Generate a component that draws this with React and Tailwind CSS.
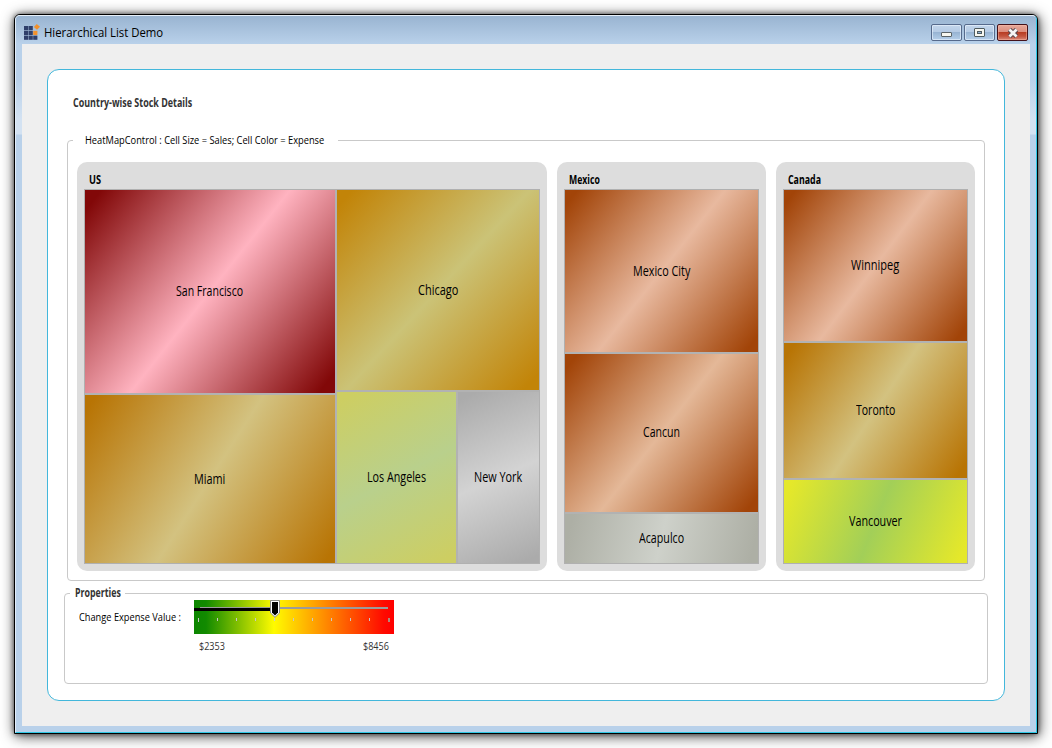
import { useLayoutEffect, useRef } from "react";

// Text squeezed horizontally to a given width, like a narrow UI face.
function Label({ text, w, className = "" }) {
  const inner = useRef(null);
  useLayoutEffect(() => {
    const el = inner.current;
    el.style.transform = `scaleX(${w / el.offsetWidth})`;
  }, [w]);
  return (
    <span className={`flex shrink-0 ${className}`} style={{ width: w }}>
      <span ref={inner} className="inline-block origin-left whitespace-nowrap">
        {text}
      </span>
    </span>
  );
}

function Cell({ name, w, className }) {
  return (
    <div className={`flex items-center justify-center pr-px text-[14px] leading-[18px] ${className}`}>
      <Label text={name} w={w} />
    </div>
  );
}

function Country({ name, w, className, children }) {
  return (
    <section className={`flex h-[409px] flex-col rounded-[10px] bg-[#dddddd] px-[7px] pb-[7px] ${className}`}>
      <h2 className="flex h-[27px] shrink-0 items-center pl-[5px] pt-[9px] text-[11.5px] leading-[16px] font-bold">
        <Label text={name} w={w} />
      </h2>
      <div className="flex min-h-0 flex-1 gap-[2px] border border-[#b0b0b0] bg-[#b2b2b2]">{children}</div>
    </section>
  );
}

function TitleButton({ close = false, children }) {
  return (
    <button
      className={`flex h-[17px] w-[31px] items-center justify-center rounded-[2px] border ${
        close
          ? "border-[#43111a] bg-[linear-gradient(180deg,#e6a99c_0%,#dc8c7c_48%,#b83d24_50%,#c4553f_75%,#d8897a_100%)] shadow-[inset_0_0_0_1px_rgba(255,190,170,0.45)]"
          : "border-[#566a8c] bg-[linear-gradient(180deg,#c3d6ec_0%,#b4cae4_48%,#98b4d3_50%,#b5cfea_100%)] shadow-[inset_0_0_0_1px_rgba(235,245,255,0.6)]"
      }`}
    >
      {children}
    </button>
  );
}

function AppIcon() {
  return (
    <svg width="16" height="16" viewBox="0 0 16 16" className="-mt-px shrink-0">
      <g fill="#2f3f6b">
        <rect x="0" y="2" width="4.2" height="4.2" />
        <rect x="4.6" y="2" width="4.2" height="4.2" />
        <rect x="0" y="6.8" width="4.2" height="4.2" />
        <rect x="4.6" y="6.8" width="4.2" height="4.2" />
        <rect x="0" y="11.6" width="4.2" height="4.2" />
        <rect x="4.6" y="11.6" width="4.2" height="4.2" />
        <rect x="9.2" y="11.6" width="4.2" height="4.2" />
      </g>
      <rect x="9.2" y="6.8" width="4.2" height="4.2" fill="#f2912c" />
      <path d="M12.8 0 L16 2.7 L13 5.8 L9.9 2.9 Z" fill="#f2912c" />
    </svg>
  );
}

const ticks = [4, 23, 42, 61, 80, 99, 118, 137, 156, 175];

function Slider() {
  return (
    <svg width="200" height="34" viewBox="0 0 200 34" className="block" shapeRendering="crispEdges">
      <defs>
        <linearGradient id="expense" x1="0" x2="1" y1="0" y2="0">
          <stop offset="0" stopColor="#0c8600" />
          <stop offset="0.06" stopColor="#128a00" />
          <stop offset="0.4" stopColor="#fffb00" />
          <stop offset="0.68" stopColor="#ff8000" />
          <stop offset="0.95" stopColor="#ff0a00" />
          <stop offset="1" stopColor="#ff0000" />
        </linearGradient>
      </defs>
      <rect width="200" height="34" fill="url(#expense)" />
      <rect x="6" y="7" width="188" height="2" fill="#9b9b9b" />
      <rect x="0" y="8" width="78" height="3" fill="#000" />
      {ticks.map((x) => (
        <rect key={x} x={x} y="18" width="1" height={x === 4 ? 4 : 3} fill="#c8c8c8" />
      ))}
      <rect x="194" y="18" width="2" height="4" fill="#b08a7c" />
      <path
        d="M76.5 0.5 H85.5 V13 L81 17.3 L76.5 13 Z"
        fill="#fff"
        stroke="#8a8a8a"
        shapeRendering="geometricPrecision"
      />
      <path d="M78 2 H84 V12.5 L81 15.4 L78 12.5 Z" fill="#000" shapeRendering="geometricPrecision" />
    </svg>
  );
}

export default function App() {
  return (
    <div className="h-[748px] w-[1052px] overflow-hidden bg-white p-[14px] font-['Open_Sans','Noto_Sans',sans-serif] text-black">
      <div className="h-[720px] w-[1024px] rounded-t-[6px] border border-black bg-[#b9d1ea] shadow-[0_0_5px_rgba(0,0,0,0.55),1px_2px_14px_rgba(0,0,0,0.75)]">
        <div className="flex h-[718px] flex-col rounded-t-[5px] border border-t-[#e8f1fa] border-r-[#2fc8e6] border-b-[#2fc8e6] border-l-[#e3eefa]">
          <header className="flex h-[28px] shrink-0 items-start justify-between rounded-t-[4px] bg-[linear-gradient(180deg,#99b4d1,#b9d1ea)] px-[8px] pt-[8px]">
            <div className="flex items-center">
              <AppIcon />
              <Label text="Hierarchical List Demo" w={119} className="ml-[4px] text-[12.5px] leading-[17px]" />
            </div>
            <div className="flex gap-[2px]">
              <TitleButton>
                <svg width="12" height="9" className="mt-[2px]" viewBox="0 0 12 9">
                  <rect x="0.5" y="3.5" width="10" height="4" rx="0.5" fill="#f7f7f0" stroke="#5b6468" />
                </svg>
              </TitleButton>
              <TitleButton>
                <svg width="12" height="10" viewBox="0 0 12 10">
                  <rect x="0.5" y="0.5" width="10" height="8" rx="0.5" fill="#f7f7f0" stroke="#4f5b5f" />
                  <rect x="3.5" y="3.5" width="4" height="2" fill="#8fb0d4" stroke="#4f5b5f" />
                </svg>
              </TitleButton>
              <TitleButton close>
                <svg width="12" height="10" viewBox="0 0 12 10">
                  <path d="M2.4 1.6 L9.6 8.4 M9.6 1.6 L2.4 8.4" stroke="#5a4a50" strokeWidth="4.8" />
                  <path d="M2.4 1.6 L9.6 8.4 M9.6 1.6 L2.4 8.4" stroke="#f5f5f5" strokeWidth="2.8" />
                </svg>
              </TitleButton>
            </div>
          </header>

          <div className="flex h-[688px] bg-[linear-gradient(180deg,#b9d1ea_0px,#b9d1ea_35px,#d3e2f2_75px,#d3e2f2_90px,#b9d1ea_91px)] px-[6px] pb-[6px]">
            <main className="h-[682px] w-[1008px] bg-[#efefef] pl-[25px] pt-[25px]">
              <div className="h-[632px] w-[958px] rounded-[12px] border border-[#43b7db] bg-white pt-[25px]">
                <h1 className="flex h-[16px] items-center pl-[25px] text-[11.5px] leading-[16px] font-bold text-[#333333]">
                  <Label text="Country-wise Stock Details" w={119} />
                </h1>

                <fieldset className="mt-[22px] ml-[19px] h-[448px] w-[918px] rounded-[4px] border border-[#c9c9c9]">
                  <legend className="ml-[5px] h-[15px] pl-[12px] pr-[14px] text-[11.5px] leading-[13px]">
                    <Label text="HeatMapControl : Cell Size = Sales; Cell Color = Expense" w={239} />
                  </legend>
                  <div className="mt-[14px] ml-[9px] flex gap-[10px]">
                    <Country name="US" w={12} className="w-[470px]">
                      <div className="flex w-[250px] flex-col gap-[2px]">
                        <Cell name="San Francisco" w={67} className="h-[203px] pb-[2px] bg-[linear-gradient(128.3deg,#820808_4%,#ffb3c0_50%,#820808_96%)]" />
                        <Cell name="Miami" w={31} className="h-[168px] bg-[linear-gradient(122.6deg,#b87404_3%,#d3c280_50%,#b87404_97%)]" />
                      </div>
                      <div className="flex w-[202px] flex-col gap-[2px]">
                        <Cell name="Chicago" w={40} className="h-[200px] bg-[linear-gradient(132.6deg,#c28408_4%,#cbc377_50%,#c28408_96%)]" />
                        <div className="flex h-[171px] gap-[2px]">
                          <Cell name="Los Angeles" w={59} className="w-[119px] pb-[2px] bg-[linear-gradient(151.5deg,#cdce62_4%,#b9d08c_50%,#cdce62_96%)]" />
                          <Cell name="New York" w={48} className="w-[81px] pb-[2px] bg-[linear-gradient(156deg,#ababab_4%,#d3d3d3_50%,#ababab_96%)]" />
                        </div>
                      </div>
                    </Country>

                    <Country name="Mexico" w={31} className="w-[209px]">
                      <div className="flex w-[193px] flex-col gap-[2px]">
                        <Cell name="Mexico City" w={57} className="h-[162px] bg-[linear-gradient(128.3deg,#a24408_4%,#e8b99f_50%,#a24408_96%)]" />
                        <Cell name="Cancun" w={37} className="h-[158px] pb-[2px] bg-[linear-gradient(128deg,#a24408_4%,#e4b898_50%,#a24408_96%)]" />
                        <Cell name="Acapulco" w={45} className="h-[49px] pb-[2px] bg-[linear-gradient(103deg,#adafa5_4%,#ced1ca_50%,#adafa5_96%)]" />
                      </div>
                    </Country>

                    <Country name="Canada" w={33} className="w-[199px]">
                      <div className="flex w-[183px] flex-col gap-[2px]">
                        <Cell name="Winnipeg" w={48} className="h-[151px] pb-[2px] bg-[linear-gradient(126.9deg,#a24408_4%,#e8b99f_50%,#a24408_96%)]" />
                        <Cell name="Toronto" w={39} className="h-[135px] pb-[2px] bg-[linear-gradient(123.7deg,#b87404_4%,#d3c280_50%,#b87404_96%)]" />
                        <Cell name="Vancouver" w={53} className="h-[83px] pb-[2px] bg-[linear-gradient(111.8deg,#e5e82a_4%,#a2cf58_50%,#e5e82a_96%)]" />
                      </div>
                    </Country>
                  </div>
                </fieldset>

                <fieldset className="mt-[5px] ml-[16px] h-[98px] w-[924px] rounded-[4px] border border-[#c9c9c9]">
                  <legend className="ml-[5px] h-[15px] pl-[5px] pr-[4px] text-[11.5px] leading-[13px] font-bold text-[#333333]">
                    <Label text="Properties" w={46} />
                  </legend>
                  <div className="-mt-px flex pl-[14px]">
                    <Label text="Change Expense Value :" w={102} className="mt-[9px] text-[11.5px] leading-[16px]" />
                    <div className="ml-[13px] w-[200px]">
                      <Slider />
                      <div className="mt-[4px] flex justify-between pl-[5px] pr-[5px] text-[11.5px] leading-[16px] text-[#333333]">
                        <Label text="$2353" w={26} />
                        <Label text="$8456" w={26} />
                      </div>
                    </div>
                  </div>
                </fieldset>
              </div>
            </main>
          </div>
        </div>
      </div>
    </div>
  );
}
